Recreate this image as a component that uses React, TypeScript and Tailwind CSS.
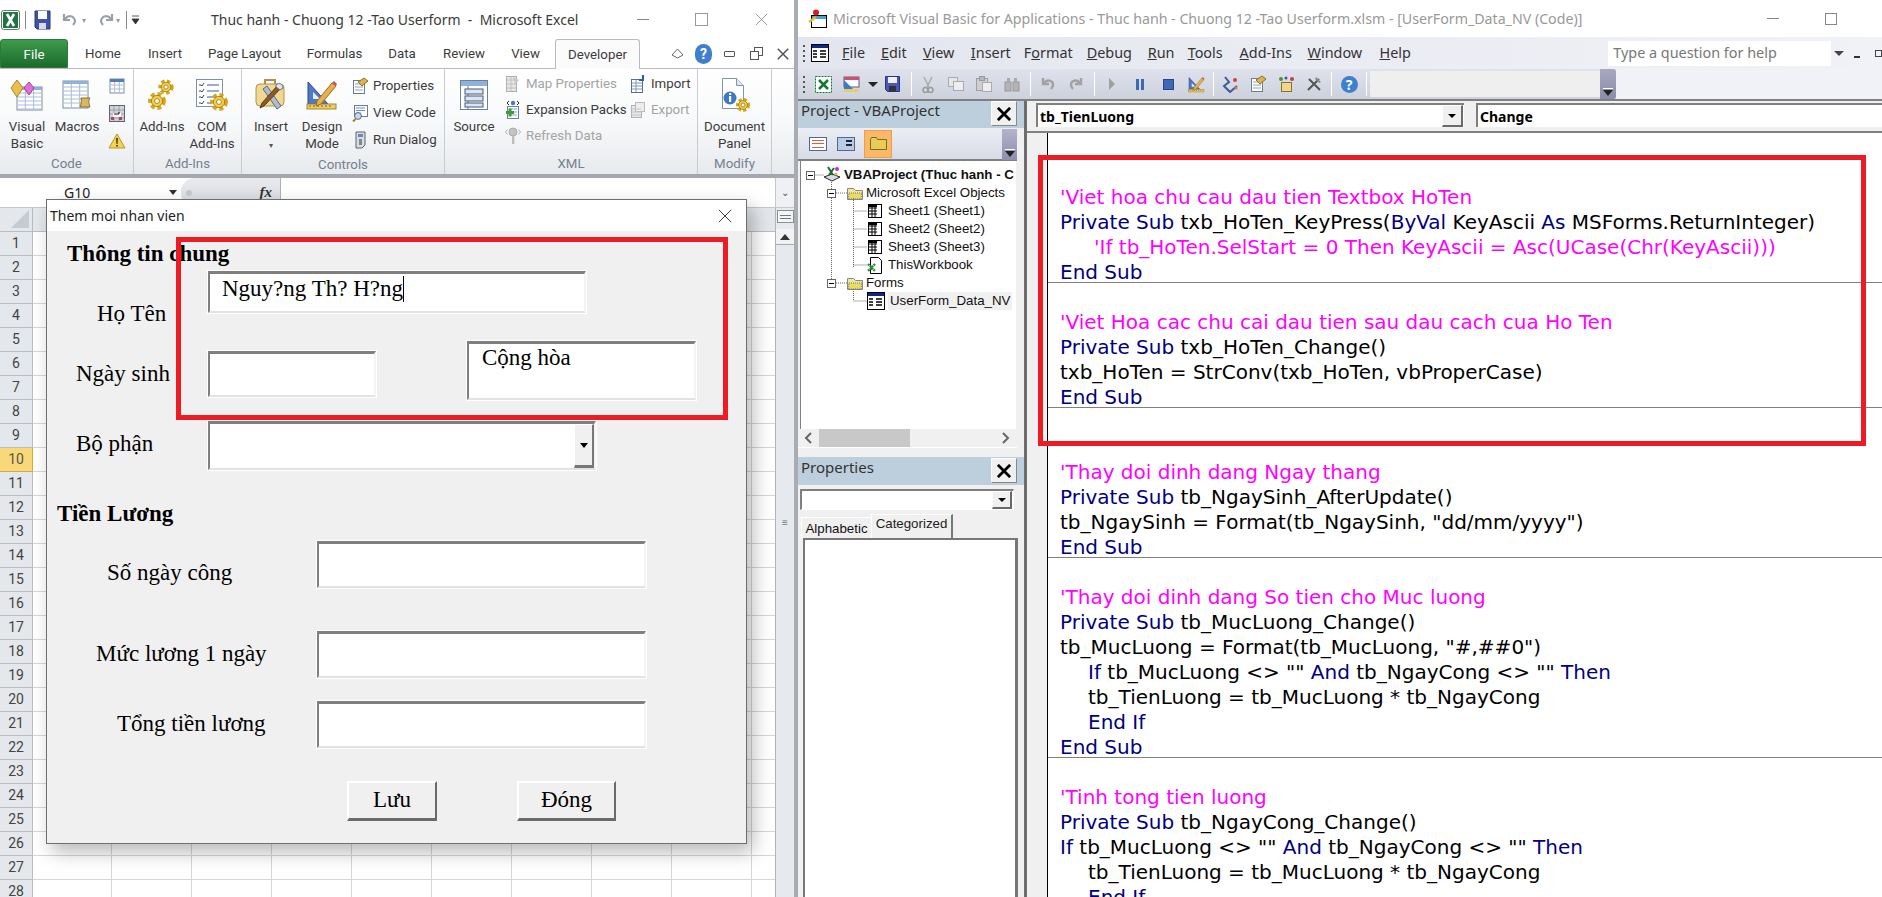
import React from "react";

const Tab = ({ w, t }: { w: string; t: string }) => <div className={`${w} text-center`}>{t}</div>;

const Gear = ({ x, y, r }: { x: number; y: number; r: number }) => (
  <g>
    <circle cx={x} cy={y} r={r} fill="none" stroke="#d9a514" strokeWidth={r * 0.55} strokeDasharray={`${r * 0.55} ${r * 0.4}`} />
    <circle cx={x} cy={y} r={r * 0.8} fill="#f4cf4a" stroke="#9c7410" strokeWidth="0.8" />
    <circle cx={x} cy={y} r={r * 0.35} fill="#fff" stroke="#9c7410" strokeWidth="0.8" />
  </g>
);

const TableRows = ({ x, y, w, h, head = "#8fb2dc" }: { x: number; y: number; w: number; h: number; head?: string }) => (
  <g>
    <rect x={x} y={y} width={w} height={h} fill="#fff" stroke="#7a8da8" />
    <rect x={x} y={y} width={w} height={3} fill={head} />
    {[6, 10, 14, 18, 22].filter((d) => d < h).map((d) => (
      <line key={d} x1={x + 1} x2={x + w - 1} y1={y + d} y2={y + d} stroke="#a8bcd8" />
    ))}
    <line x1={x + w / 3} x2={x + w / 3} y1={y + 3} y2={y + h} stroke="#a8bcd8" />
    <line x1={x + (2 * w) / 3} x2={x + (2 * w) / 3} y1={y + 3} y2={y + h} stroke="#a8bcd8" />
  </g>
);

const VisualBasicIcon = () => (
  <svg width="34" height="32" viewBox="0 0 34 32">
    <TableRows x={7} y={8} w={25} h={23} />
    <path d="M7 1l6 8-6 9-6-9z" fill="#e8c04a" stroke="#a8842a" />
    <path d="M19 3l5 6-5 7-5-7z" fill="#e070d8" stroke="#a040a0" />
  </svg>
);
const MacrosIcon = () => (
  <svg width="34" height="32" viewBox="0 0 34 32">
    <TableRows x={3} y={2} w={25} h={27} />
    <path d="M21 19h9c-2 3-1 6 0 9h-10c1-3 2-6 1-9z" fill="#d9b860" stroke="#8c6f28" />
  </svg>
);
const RecordIcon = () => (
  <svg width="16" height="16" viewBox="0 0 16 16">
    <TableRows x={1} y={1} w={14} h={14} head="#4f7fbf" />
    <circle cx="5" cy="3" r="1" fill="#d04040" />
  </svg>
);
const RelIcon = () => (
  <svg width="16" height="17" viewBox="0 0 16 17">
    <rect x="0.5" y="0.5" width="15" height="16" fill="#cfd3da" stroke="#5c6470" />
    <path d="M1 5h14M1 9h14M1 13h14M5 1v15M10 1v15" stroke="#7b8390" strokeWidth="0.6" />
    <rect x="4" y="8" width="8" height="4" fill="#fff" />
    <path d="M5 9h5v-2" stroke="#111" fill="none" />
    <rect x="2" y="12" width="3" height="3" fill="#c8385a" />
    <rect x="10" y="12" width="3" height="3" fill="#c8385a" />
  </svg>
);
const WarnIcon = () => (
  <svg width="18" height="16" viewBox="0 0 18 16">
    <path d="M9 1l8 14H1z" fill="#f7d24a" stroke="#b8962c" />
    <path d="M8.2 5h1.6l-.3 6h-1zM8.2 12h1.6v1.6H8.2z" fill="#222" />
  </svg>
);
const AddInsIcon = () => (
  <svg width="28" height="32" viewBox="0 0 28 32">
    <Gear x={18} y={8} r={6} />
    <Gear x={9} y={22} r={7} />
  </svg>
);
const ComIcon = () => (
  <svg width="34" height="34" viewBox="0 0 34 34">
    <rect x="1.5" y="1.5" width="26" height="27" fill="#fff" stroke="#8090a8" />
    <path d="M4 7h2l1 1 2-3M4 13h2l1 1 2-3M4 19h2l1 1 2-3M4 25h2l1 1 2-3" stroke="#445" fill="none" />
    <path d="M12 7h12M12 13h12M12 19h7M12 25h4" stroke="#7a94c4" strokeWidth="1.4" />
    <Gear x={24} y={24} r={7} />
  </svg>
);
const InsertIcon = () => (
  <svg width="34" height="34" viewBox="0 0 34 34">
    <rect x="2" y="6" width="28" height="22" rx="4" fill="#f0d890" stroke="#b2924a" />
    <path d="M11 6V2h10v4" fill="none" stroke="#b2924a" strokeWidth="2" />
    <path d="M9 11l14 20 4-3L13 8z" fill="#aebccc" stroke="#5d6b7e" />
    <path d="M28 9L10 28l-4 2 2-5L24 7z" fill="#8a5a28" stroke="#5e3a14" />
    <path d="M22 7c3-3 7-1 7 3l-3 2-4-3z" fill="#dfe5ee" stroke="#5d6b7e" />
  </svg>
);
const DesignIcon = ({ s = 32 }: { s?: number }) => (
  <svg width={s} height={s} viewBox="0 0 32 32">
    <path d="M2 3v22h20z" fill="#4f78c8" stroke="#27468c" />
    <path d="M7 13v7h7z" fill="#e8edf8" />
    <rect x="1" y="25" width="29" height="5" fill="#e8cd68" stroke="#a8872a" />
    <path d="M4 26v2M8 26v2M12 26v2M16 26v2M20 26v2M24 26v2" stroke="#7c6518" />
    <path d="M11 22l15-18 4 3-15 18-5 2z" fill="#e8b04c" stroke="#a06c20" />
    <path d="M26 4l2-2 3 3-1 2z" fill="#d05050" />
  </svg>
);
const PropsIcon = () => (
  <svg width="17" height="18" viewBox="0 0 17 18">
    <rect x="1.5" y="3.5" width="11" height="13" fill="#fff" stroke="#6c7c94" />
    <path d="M3 7h8M3 10h8M3 13h8" stroke="#8aa0c0" />
    <path d="M6 5l6-4 4 3-6 5z" fill="#d8b450" stroke="#8d7226" />
  </svg>
);
const ViewCodeIcon = () => (
  <svg width="17" height="18" viewBox="0 0 17 18">
    <rect x="2.5" y="1.5" width="13" height="11" fill="#fff" stroke="#6c7c94" />
    <path d="M4 4h9M4 6.5h9M4 9h5" stroke="#6a8cc0" />
    <circle cx="6" cy="12" r="3.4" fill="#c6d8ec" stroke="#5a6a7c" />
    <path d="M3.5 15L1 17.5" stroke="#a87c30" strokeWidth="2" />
  </svg>
);
const RunDlgIcon = () => (
  <svg width="16" height="18" viewBox="0 0 16 18">
    <path d="M4 1h9v13l-3 3H4z" fill="#d8dde4" stroke="#5a6470" />
    <rect x="6" y="3" width="5" height="3" fill="#6c88b0" />
    <rect x="7" y="8" width="3" height="6" fill="#7c8898" />
  </svg>
);
const SourceIcon = () => (
  <svg width="32" height="34" viewBox="0 0 32 34">
    <rect x="2.5" y="2.5" width="27" height="29" fill="#fff" stroke="#6c7f9c" />
    <rect x="3" y="3" width="26" height="5" fill="#8fb2dc" />
    <path d="M10 8v23" stroke="#6c7f9c" />
    <rect x="7" y="11" width="18" height="5" fill="#dbe6f4" stroke="#44597a" />
    <rect x="7" y="18" width="18" height="5" fill="#dbe6f4" stroke="#44597a" />
    <rect x="7" y="25" width="18" height="4" fill="#dbe6f4" stroke="#44597a" />
  </svg>
);
const MapIcon = () => (
  <svg width="16" height="18" viewBox="0 0 16 18">
    <rect x="1.5" y="1.5" width="10" height="15" fill="#e6e6e6" stroke="#b0b0b0" />
    <path d="M2 5h9M2 9h9M2 13h9M6 2v14" stroke="#c0c0c0" />
    <path d="M8 2l6 3-4 4z" fill="#c8c8c8" />
  </svg>
);
const ExpIcon = () => (
  <svg width="16" height="20" viewBox="0 0 16 20">
    <rect x="2.5" y="6.5" width="11" height="12" fill="#fff" stroke="#6d7f99" />
    <path d="M4 9h8M4 12h8M4 15h8" stroke="#8da4c4" />
    <rect x="1" y="11" width="8" height="3" fill="#3f9a38" />
    <rect x="3.5" y="8.5" width="3" height="8" fill="#3f9a38" />
    <circle cx="8" cy="3" r="2.2" fill="#3c7ec0" />
    <path d="M2 3l2-2M2 3l2 2M14 3l-2-2M14 3l-2 2" stroke="#222" />
  </svg>
);
const RefreshIcon = () => (
  <svg width="16" height="20" viewBox="0 0 16 20">
    <circle cx="8" cy="6" r="4" fill="#c4c4c4" stroke="#aaa" />
    <rect x="7" y="10" width="2.4" height="8" fill="#bdbdbd" />
    <path d="M2.5 3.5L.5 6l2 2.5M13.5 3.5l2 2.5-2 2.5" stroke="#b0b0b0" fill="none" />
  </svg>
);
const ImportIcon = () => (
  <svg width="16" height="18" viewBox="0 0 16 18">
    <rect x="1.5" y="4.5" width="11" height="13" fill="#fff" stroke="#5d6f8b" />
    <path d="M2 8h10M2 11h10M2 14h10M6 5v12" stroke="#7e97bd" />
    <path d="M13 0v5h-4" fill="none" stroke="#2c5ea8" strokeWidth="2" />
  </svg>
);
const ExportIcon = () => (
  <svg width="16" height="18" viewBox="0 0 16 18">
    <rect x="1.5" y="4.5" width="10" height="12" fill="#e8e8e8" stroke="#b4b4b4" />
    <rect x="5.5" y="1.5" width="9" height="9" fill="#ededed" stroke="#bbb" />
    <path d="M2 8h9M2 11h9M2 14h9" stroke="#c6c6c6" />
  </svg>
);
const DocPanelIcon = () => (
  <svg width="32" height="36" viewBox="0 0 32 36">
    <path d="M3.5 1.5h14l7 7v23h-21z" fill="#fff" stroke="#8393aa" />
    <path d="M17.5 1.5v7h7" fill="#dfe6ef" stroke="#8393aa" />
    <circle cx="11" cy="21" r="6.5" fill="#3f77c8" />
    <rect x="10" y="19" width="2.2" height="6" fill="#fff" />
    <rect x="10" y="16" width="2.2" height="2" fill="#fff" />
    <Gear x={24} y={28} r={5.5} />
  </svg>
);

const Big = ({ w, icon, l1, l2, icoH = "h-[36px]" }: { w: string; icon: React.ReactNode; l1: string; l2?: React.ReactNode; icoH?: string }) => (
  <div className={`${w} flex flex-col items-center`}>
    <div className={`${icoH} flex items-center justify-center mt-[8px]`}>{icon}</div>
    <div className="mt-[5px] leading-[17px] text-center whitespace-nowrap text-[#3c3c3c]">{l1}</div>
    <div className="leading-[17px] text-center whitespace-nowrap text-[#3c3c3c]">{l2}</div>
  </div>
);

const Group = ({ w, label, children }: { w: string; label: string; children: React.ReactNode }) => (
  <div className={`${w} flex flex-col border-r border-[#c8ccd2] shrink-0`}>
    <div className="flex h-[85px]">{children}</div>
    <div className="h-[21px] text-center text-[#75808c] leading-[21px]">{label}</div>
  </div>
);

const SmallItem = ({ icon, t, dis, h = "h-[27px]" }: { icon: React.ReactNode; t: string; dis?: boolean; h?: string }) => (
  <div className={`flex items-center ${h} whitespace-nowrap`}>
    <div className="w-[21px] flex justify-start">{icon}</div>
    <span className={dis ? "text-[#a4a4a4]" : "text-[#3c3c3c]"}>{t}</span>
  </div>
);

const XClose = ({ s = 16, c = "#333", w = 1 }: { s?: number; c?: string; w?: number }) => (
  <svg width={s} height={s} viewBox="0 0 16 16">
    <path d="M1 1l14 14M15 1L1 15" stroke={c} strokeWidth={w} fill="none" />
  </svg>
);

const TitleBar = () => (
  <div className="h-[39px] flex items-center bg-white relative shrink-0">
    <svg className="ml-[1px]" width="20" height="22" viewBox="0 0 20 22">
      <rect x="0.5" y="1.5" width="18" height="19" rx="2" fill="#fff" stroke="#5e7a62" />
      <rect x="2" y="3" width="15" height="16" fill="#217346" />
      <path d="M6 5l7 12M13 5L6 17" stroke="#fff" strokeWidth="2.6" />
    </svg>
    <div className="ml-[4px] w-px h-[18px] bg-[#8a8a8a]" />
    <svg className="ml-[8px]" width="17" height="20" viewBox="0 0 17 20">
      <path d="M1 1h15v18H3l-2-2z" fill="#3f52a8" stroke="#2b3977" />
      <rect x="4" y="1" width="9" height="8" fill="#fff" />
      <rect x="5" y="13" width="7" height="6" fill="#d8dbe6" />
    </svg>
    <svg className="ml-[11px]" width="18" height="16" viewBox="0 0 18 16">
      <path d="M2 2v6h6M3 7c3-4 9-4 10 2 0 2-1 3-2 4" stroke="#9aa0a8" strokeWidth="2.2" fill="none" />
    </svg>
    <span className="text-[#9a9a9a] text-[8px] ml-[2px]">▾</span>
    <svg className="ml-[10px]" width="18" height="16" viewBox="0 0 18 16">
      <path d="M16 2v6h-6M15 7c-3-4-9-4-10 2 0 2 1 3 2 4" stroke="#9aa0a8" strokeWidth="2.2" fill="none" />
    </svg>
    <span className="text-[#9a9a9a] text-[8px] ml-[2px]">▾</span>
    <div className="ml-[6px] w-px h-[18px] bg-[#8a8a8a]" />
    <svg className="ml-[4px]" width="9" height="10" viewBox="0 0 9 10"><path d="M1 1h7M1 4h7L4.5 9z" fill="#333" stroke="#333" strokeWidth="0.8" /></svg>
    <div className="ml-[71px] text-[14px] text-[#3a3a3a] whitespace-nowrap w-[370px]">Thuc hanh - Chuong 12 -Tao Userform&nbsp; -&nbsp; Microsoft Excel</div>
    <div className="w-[12px] h-px bg-[#888] ml-[56px]" />
    <div className="w-[13px] h-[13px] border border-[#999] ml-[46px]" />
    <div className="ml-[47px]"><XClose s={13} c="#888" /></div>
  </div>
);

const TabsRow = () => (
  <div className="h-[29px] flex bg-white text-[13.3px] [font-family:'Roboto',sans-serif] text-[#3c3c3c] leading-[29px] relative shrink-0 z-10">
    <div className="w-[68px] text-center text-white bg-gradient-to-b from-[#3e9b4c] to-[#1a6b2c] rounded-t-[3px] border border-[#2b7a3a]">File</div>
    <Tab w="w-[70px]" t="Home" />
    <Tab w="w-[54px]" t="Insert" />
    <Tab w="w-[105px]" t="Page Layout" />
    <Tab w="w-[75px]" t="Formulas" />
    <Tab w="w-[60px]" t="Data" />
    <Tab w="w-[64px]" t="Review" />
    <Tab w="w-[59px]" t="View" />
    <div className="w-[85px] h-[30px] text-center bg-[#fbfbfc] border border-b-0 border-[#b8bcc2] rounded-t-[3px]">Developer</div>
    <div className="flex items-center ml-[31px] h-[29px]">
      <svg width="13" height="11" viewBox="0 0 13 11"><path d="M6.5 1L12 7l-5.5 3L1 7z" fill="#fff" stroke="#666" /></svg>
      <div className="ml-[11px] w-[17px] h-[20px] rounded-full bg-[#3f7fd0] text-white text-[14px] font-bold leading-[20px] text-center">?</div>
      <div className="w-[11px] h-[6px] border border-[#555] rounded-[1px] ml-[12px]" />
      <svg className="ml-[15px]" width="13" height="13" viewBox="0 0 13 13"><rect x="4.5" y="0.5" width="8" height="8" fill="#fff" stroke="#555" /><rect x="0.5" y="4.5" width="8" height="8" fill="#fff" stroke="#555" /></svg>
      <div className="ml-[14px]"><XClose s={12} c="#555" w={2} /></div>
    </div>
  </div>
);

const Ribbon = () => (
  <div className="h-[106px] flex bg-gradient-to-b from-white via-[#f8f9fa] to-[#e7eaee] text-[13.3px] [font-family:'Roboto',sans-serif] border-t border-[#b8bcc2] shrink-0">
    <Group w="w-[134px]" label="Code">
      <Big w="w-[54px]" icon={<VisualBasicIcon />} l1="Visual" l2="Basic" />
      <Big w="w-[46px]" icon={<MacrosIcon />} l1="Macros" l2={"\u00a0"} />
      <div className="w-[33px] flex flex-col items-center pt-[9px] gap-[11px]"><RecordIcon /><RelIcon /><WarnIcon /></div>
    </Group>
    <Group w="w-[108px]" label="Add-Ins">
      <Big w="w-[56px]" icon={<AddInsIcon />} l1="Add-Ins" l2={"\u00a0"} />
      <Big w="w-[44px]" icon={<ComIcon />} l1="COM" l2="Add-Ins" />
    </Group>
    <Group w="w-[203px]" label="Controls">
      <Big w="w-[58px]" icon={<InsertIcon />} l1="Insert" l2={<span className="text-[8px] text-[#555]">▾</span>} />
      <Big w="w-[44px]" icon={<DesignIcon />} l1="Design" l2="Mode" />
      <div className="ml-[8px] pt-[3px]">
        <SmallItem icon={<PropsIcon />} t="Properties" />
        <SmallItem icon={<ViewCodeIcon />} t="View Code" />
        <SmallItem icon={<RunDlgIcon />} t="Run Dialog" />
      </div>
    </Group>
    <Group w="w-[253px]" label="XML">
      <Big w="w-[58px]" icon={<SourceIcon />} l1="Source" l2={"\u00a0"} />
      <div className="ml-[2px] pt-[2px] w-[125px]">
        <SmallItem h="h-[26px]" icon={<MapIcon />} t="Map Properties" dis />
        <SmallItem h="h-[26px]" icon={<ExpIcon />} t="Expansion Packs" />
        <SmallItem h="h-[26px]" icon={<RefreshIcon />} t="Refresh Data" dis />
      </div>
      <div className="pt-[2px]">
        <SmallItem h="h-[26px]" icon={<ImportIcon />} t="Import" />
        <SmallItem h="h-[26px]" icon={<ExportIcon />} t="Export" dis />
      </div>
    </Group>
    <Group w="w-[74px]" label="Modify">
      <Big w="w-[73px]" icon={<DocPanelIcon />} l1="Document" l2="Panel" />
    </Group>
  </div>
);

const FormulaBar = () => (
  <div className="h-[34px] flex items-center bg-white border-t-[4px] border-[#a4a8ae] shrink-0 border-b border-b-[#c4c8ce]">
    <div className="w-[169px] pl-[64px] text-[14px] text-[#222]">G10</div>
    <div className="w-0 h-0 border-x-[4px] border-x-transparent border-t-[5px] border-t-[#333]" />
    <div className="ml-[4px] w-[100px] h-full bg-gradient-to-b from-[#e8eaee] to-[#d8dbe0] rounded-l-[14px] border-r border-[#b0b4ba] flex items-center justify-between pl-[5px] pr-[8px] [font-family:'Liberation_Serif',serif] italic font-bold text-[15px] text-[#333]">
      <div className="w-[6px] h-[6px] rounded-full bg-[#c6c9ce]" />
      <span>fx</span>
    </div>
    <div className="flex-1" />
    <div className="w-[19px] h-full border-l border-[#c4c8ce] bg-[#eef0f3] flex items-center justify-center text-[10px] text-[#555]">⌄</div>
  </div>
);

const rowNums = Array.from({ length: 28 }, (_, i) => i + 1);
const cols = [79, 80, 80, 80, 80, 80, 80, 80, 80];

const Sheet = () => (
  <div className="flex-1 flex min-h-0 relative">
    <div className="w-[775px] flex flex-col">
      <div className="h-[24px] flex bg-[#e4e7eb] border-b border-[#b8bdc4] shrink-0">
        <div className="w-[33px] border-r border-[#b8bdc4] flex items-end justify-end p-[3px]">
          <div className="w-0 h-0 border-l-[18px] border-l-transparent border-b-[18px] border-b-[#c6cbd2]" />
        </div>
      </div>
      {rowNums.map((n) => (
        <div key={n} className="h-[24px] flex shrink-0">
          <div className={n === 10
            ? "w-[33px] h-[24px] flex items-center justify-center text-[14px] [font-family:'Roboto',sans-serif] bg-[#f9d878] text-[#555] border-b border-r border-[#d2a84a]"
            : "w-[33px] h-[24px] flex items-center justify-center text-[14px] [font-family:'Roboto',sans-serif] bg-[#e4e7eb] text-[#444] border-b border-r border-[#b8bdc4]"}>{n}</div>
          {cols.map((w, i) => (
            <div key={i} style={{ width: w }} className="h-[24px] border-b border-r border-[#d6d6d6] bg-white" />
          ))}
          <div className="flex-1 border-b border-[#d6d6d6] bg-white" />
        </div>
      ))}
    </div>
    <div className="w-[19px] bg-[#e6e9ed] border-l border-[#b0b4ba] flex flex-col items-center">
      <div className="w-[17px] h-[13px] mt-[2px] border border-[#8a8f96] bg-[#f4f5f7] flex items-center justify-center"><div className="w-[11px] h-[4px] border-y border-[#777]" /></div>
      <div className="mt-[6px] h-[16px] w-[18px] bg-[#f0f2f4] border-b border-[#aaa] flex items-center justify-center">
        <div className="w-0 h-0 border-x-[5px] border-x-transparent border-b-[6px] border-b-[#333]" />
      </div>
      <div className="h-[275px]" />
      <div className="text-[10px] leading-[4px] text-[#777]">≡</div>
    </div>
  </div>
);

const inset = "bg-white border-t-[3px] border-l-[2px] border-r-[2px] border-b-[2px] border-t-[#7f7f7f] border-l-[#7f7f7f] border-r-[#f4f4f4] border-b-[#e2e2e2] outline outline-1 outline-white";
const label = "h-[25px] leading-[25px] text-[23px] text-[#000] whitespace-nowrap";
const head = "h-[25px] leading-[25px] text-[23px] font-bold text-[#000] whitespace-nowrap";

const UserForm = () => (
  <div className="absolute left-[46px] top-[199px] w-[701px] h-[645px] border border-[#6e6e6e] bg-[#f0f0f0] shadow-[6px_8px_18px_rgba(0,0,0,0.28)] flex flex-col z-20">
    <div className="h-[31px] bg-white flex items-center justify-between pl-[3px] pr-[14px] text-[14px] text-[#222] shrink-0">
      <span>Them moi nhan vien</span>
      <XClose s={14} c="#222" />
    </div>
    <div className="[font-family:'Liberation_Serif',serif] flex flex-col">
      <div className={`${head} mt-[10px] mb-[1px] ml-[20px]`}>Thông tin chung</div>
      <div className="flex mt-[4px]">
        <div className="w-[161px] flex flex-col">
          <div className={`${label} mt-[30px] mb-[1px] ml-[50px]`}>Họ Tên</div>
          <div className={`${label} mt-[34px] ml-[29px]`}>Ngày sinh</div>
        </div>
        <div className="flex flex-col">
          <div className={`${inset} w-[378px] h-[42px] pl-[12px] flex items-start text-[23px] leading-[29px]`}>
            <span>Nguy?ng Th? H?ng</span><span className="w-px h-[26px] bg-black mt-[2px]" />
          </div>
          <div className="flex items-start mt-[28px]">
            <div className={`${inset} w-[168px] h-[46px] mt-[10px]`} />
            <div className={`${inset} w-[229px] h-[59px] ml-[91px] pl-[13px] text-[23px] leading-[28px]`}>Cộng hòa</div>
          </div>
        </div>
      </div>
      <div className="flex mt-[21px]">
        <div className="w-[161px]"><div className={`${label} mt-[10px] ml-[29px]`}>Bộ phận</div></div>
        <div className={`${inset} w-[388px] h-[49px] flex justify-end`}>
          <div className="w-[20px] h-full bg-[#f0f0f0] border-l border-t border-white border-r-[2px] border-b-[3px] border-r-[#777] border-b-[#777] flex items-center justify-center">
            <div className="w-0 h-0 border-x-[4px] border-x-transparent border-t-[5px] border-t-black" />
          </div>
        </div>
      </div>
      <div className={`${head} mt-[31px] mb-[1px] ml-[10px]`}>Tiền Lương</div>
      <div className="flex mt-[14px]">
        <div className="w-[270px]"><div className={`${label} mt-[19px] ml-[60px]`}>Số ngày công</div></div>
        <div className={`${inset} w-[329px] h-[47px]`} />
      </div>
      <div className="flex mt-[43px]">
        <div className="w-[270px]"><div className={`${label} mt-[10px] ml-[49px]`}>Mức lương 1 ngày</div></div>
        <div className={`${inset} w-[329px] h-[47px]`} />
      </div>
      <div className="flex mt-[23px]">
        <div className="w-[270px]"><div className={`${label} mt-[10px] ml-[70px]`}>Tổng tiền lương</div></div>
        <div className={`${inset} w-[329px] h-[47px]`} />
      </div>
      <div className="flex mt-[33px] ml-[300px] text-[23px]">
        <div className="w-[90px] h-[40px] flex items-center justify-center border-t-[2px] border-l-[2px] border-white border-r-[2px] border-b-[3px] border-r-[#6a6a6a] border-b-[#6a6a6a]">Lưu</div>
        <div className="w-[99px] h-[40px] ml-[80px] flex items-center justify-center border-t-[2px] border-l-[2px] border-white border-r-[2px] border-b-[3px] border-r-[#6a6a6a] border-b-[#6a6a6a]">Đóng</div>
      </div>
    </div>
  </div>
);

const Grip = () => (
  <div className="w-[3px] flex flex-col gap-[3px] ml-[5px] shrink-0">
    {[0, 1, 2, 3].map((i) => <div key={i} className="w-[2px] h-[2px] bg-[#555]" />)}
  </div>
);

const ModIcon = () => (
  <svg width="18" height="18" viewBox="0 0 18 18">
    <rect x="0.5" y="0.5" width="17" height="17" fill="#fff" stroke="#000" />
    <rect x="1" y="1" width="16" height="3" fill="#0a2a8a" />
    <path d="M2 7h4M2 10h4M2 13h4M9 7h6M9 10h6M9 13h6" stroke="#000" strokeWidth="1.5" />
  </svg>
);

const Slot = ({ w = "w-[28px]", children }: { w?: string; children: React.ReactNode }) => (
  <div className={`${w} flex justify-center items-center shrink-0`}>{children}</div>
);
const TSep = () => <div className="w-px h-[24px] bg-white shrink-0" />;

const Toolbar = () => (
  <div className="h-[30px] flex items-center w-[818px] bg-gradient-to-b from-[#dfe2ec] to-[#cdd1dc] shrink-0">
    <Grip />
    <div className="w-[3px]" />
    <Slot>
      <svg width="17" height="17" viewBox="0 0 17 17"><rect x="0.5" y="0.5" width="16" height="16" fill="#fff" stroke="#117a2a" strokeDasharray="2 1" /><path d="M4 4l9 9M13 4l-9 9" stroke="#117a2a" strokeWidth="2.5" /></svg>
    </Slot>
    <Slot w="w-[28px]">
      <svg width="17" height="17" viewBox="0 0 17 17"><rect x="1" y="1" width="15" height="10" fill="#fff" stroke="#5a5a8a" /><rect x="1" y="1" width="15" height="3" fill="#d05070" /><path d="M1 4v10h10z" fill="#3d7ac8" /><rect x="1" y="13" width="15" height="3" fill="#e8cd68" /></svg>
    </Slot>
    <Slot w="w-[16px]"><div className="w-0 h-0 border-x-[5px] border-x-transparent border-t-[5px] border-t-[#222]" /></Slot>
    <Slot w="w-[22px]">
      <svg width="15" height="16" viewBox="0 0 15 16"><path d="M.5.5h14v15H2.5l-2-2z" fill="#4a57b8" stroke="#2a3480" /><rect x="3" y="1" width="9" height="6" fill="#f0f0f0" /><rect x="4" y="10" width="7" height="5" fill="#333" /></svg>
    </Slot>
    <div className="w-[8px]" /><TSep /><div className="w-[2px]" />
    <Slot>
      <svg width="12" height="17" viewBox="0 0 12 17"><path d="M2 1l5 10M10 1L5 11" stroke="#aaa" strokeWidth="1.5" /><circle cx="3.5" cy="14" r="2.5" fill="none" stroke="#9a9a9a" strokeWidth="1.5" /><circle cx="8.5" cy="14" r="2.5" fill="none" stroke="#9a9a9a" strokeWidth="1.5" /></svg>
    </Slot>
    <Slot>
      <svg width="16" height="14" viewBox="0 0 16 14"><rect x="0.5" y="0.5" width="9" height="9" fill="#e6e6e6" stroke="#aaa" /><rect x="5.5" y="4.5" width="10" height="9" fill="#eee" stroke="#aaa" /></svg>
    </Slot>
    <Slot>
      <svg width="16" height="16" viewBox="0 0 16 16"><rect x="0.5" y="2.5" width="11" height="12" fill="#cfcfcf" stroke="#a0a0a0" /><rect x="3.5" y="0.5" width="5" height="4" fill="#b8b8b8" stroke="#999" /><rect x="6.5" y="6.5" width="9" height="9" fill="#eee" stroke="#aaa" /></svg>
    </Slot>
    <Slot>
      <svg width="16" height="15" viewBox="0 0 16 15"><rect x="1" y="5" width="6" height="9" fill="#b4b4b4" stroke="#999" /><rect x="9" y="5" width="6" height="9" fill="#b4b4b4" stroke="#999" /><rect x="3" y="1" width="3" height="5" fill="#aaa" /><rect x="10" y="1" width="3" height="5" fill="#aaa" /></svg>
    </Slot>
    <div className="w-[4px]" /><TSep /><div className="w-[3px]" />
    <Slot><svg width="14" height="14" viewBox="0 0 14 14"><path d="M2 1v6h6M3 6c3-4 9-3 9 2 0 2-1 3-2 4" stroke="#a2a2a2" strokeWidth="2.4" fill="none" /></svg></Slot>
    <Slot><svg width="14" height="14" viewBox="0 0 14 14"><path d="M12 1v6H6M11 6C8 2 2 3 2 8c0 2 1 3 2 4" stroke="#a2a2a2" strokeWidth="2.4" fill="none" /></svg></Slot>
    <div className="w-[4px]" /><TSep /><div className="w-[3px]" />
    <Slot><div className="w-0 h-0 border-y-[6px] border-y-transparent border-l-[6px] border-l-[#a0a0a0]" /></Slot>
    <Slot><div className="flex gap-[2px]"><div className="w-[3px] h-[11px] bg-[#3d68b8]" /><div className="w-[3px] h-[11px] bg-[#3d68b8]" /></div></Slot>
    <Slot><div className="w-[11px] h-[11px] bg-[#3d68b8] border border-[#27468c]" /></Slot>
    <Slot><DesignIcon s={17} /></Slot>
    <div className="w-[3px]" /><TSep /><div className="w-[2px]" />
    <Slot>
      <svg width="17" height="17" viewBox="0 0 17 17"><path d="M3 1l4 5-5 4 6 6 7-6" fill="none" stroke="#3a5aa0" strokeWidth="2" /><circle cx="13" cy="4" r="2" fill="#d04040" /><circle cx="14" cy="12" r="1.5" fill="#e08030" /></svg>
    </Slot>
    <Slot><PropsIcon /></Slot>
    <Slot>
      <svg width="17" height="17" viewBox="0 0 17 17"><rect x="3.5" y="6.5" width="10" height="9" fill="#f0d890" stroke="#8d7226" /><circle cx="3" cy="3" r="2" fill="#3a9a40" /><circle cx="14" cy="3" r="2" fill="#c04040" /><circle cx="8" cy="2" r="1.5" fill="#3a5aa0" /></svg>
    </Slot>
    <Slot>
      <svg width="16" height="16" viewBox="0 0 16 16"><path d="M2 14L13 3M3 3l11 11" stroke="#555" strokeWidth="2" /><path d="M10 1l5 5-2 1-4-4z" fill="#8a8a8a" /></svg>
    </Slot>
    <div className="w-[3px]" /><TSep /><div className="w-[3px]" />
    <Slot><div className="w-[17px] h-[17px] rounded-full bg-[#3f7fd0] text-white text-[14px] font-bold leading-[17px] text-center">?</div></Slot>
    <div className="w-[3px]" /><TSep /><div className="w-[3px]" />
    <div className="flex-1 h-[26px] bg-[#efefef]" />
    <div className="w-[16px] h-[30px] bg-gradient-to-b from-[#a9a8c0] to-[#8d8cab] rounded-r-[3px] flex flex-col items-center justify-end pb-[3px]">
      <div className="w-[10px] h-px bg-white mb-[1px]" />
      <div className="w-0 h-0 border-x-[5px] border-x-transparent border-t-[6px] border-t-[#222]" />
    </div>
  </div>
);

const M = ({ w, a = "", u, b = "" }: { w: string; a?: string; u: string; b?: string }) => (
  <div className={w}>{a}<u>{u}</u>{b}</div>
);

const CloseBtn = () => (
  <div className="w-[26px] h-[25px] bg-[#f0f0f0] border-t border-l border-white border-r border-b border-r-[#888] border-b-[#888] flex items-center justify-center">
    <XClose s={14} c="#000" w={3.2} />
  </div>
);

const Caret = ({ w = "w-[20px]" }: { w?: string }) => (
  <div className={`${w} h-full bg-[#f0f0f0] border-t border-l border-white border-r-[2px] border-b-[2px] border-r-[#6a6a6a] border-b-[#6a6a6a] flex items-center justify-center shrink-0`}>
    <div className="w-0 h-0 border-x-[4px] border-x-transparent border-t-[4px] border-t-black" />
  </div>
);

const TreeRow = ({ pl, icon, t, bold, sel, m = "ml-[5px]" }: { pl: string; icon: React.ReactNode; t: string; bold?: boolean; sel?: boolean; m?: string }) => (
  <div className={`h-[18px] flex items-center ${pl} whitespace-nowrap`}>
    {icon}
    <span className={`${bold ? "font-bold" : ""} ${sel ? "bg-[#f0f0f0] pl-[2px] pr-[2px] ml-[3px] leading-[18px]" : m}`}>{t}</span>
  </div>
);
const FolderI = () => (
  <svg width="16" height="13" viewBox="0 0 16 13"><path d="M.5 3V1.5h6l2 2h7v9H.5z" fill="#efe6a0" stroke="#888" /><path d="M2 6h13l-1 6H1z" fill="#e8dc60" stroke="#777" strokeDasharray="1 1" /></svg>
);
const SheetI = () => (
  <svg width="16" height="14" viewBox="0 0 16 14"><rect x="1.5" y="0.5" width="13" height="13" fill="#fff" stroke="#000" /><path d="M2 4h8M2 7h8M2 10h8M5 1v12M8 1v12" stroke="#000" /><rect x="1" y="1" width="9" height="2" fill="#000" /></svg>
);
const WbI = () => (
  <svg width="16" height="17" viewBox="0 0 16 17"><path d="M3.5 0.5h8l3 3v13h-11z" fill="#fff" stroke="#000" /><path d="M1 7l7 7M8 7l-7 7" stroke="#2a8a3a" strokeWidth="2.4" strokeDasharray="2 .6" /></svg>
);
const VbaI = () => (
  <svg width="18" height="18" viewBox="0 0 18 18"><path d="M1 11l8-3 8 3-8 4z" fill="#d8dce6" stroke="#222" /><path d="M5 1l5 8M11 2L6 9" stroke="#1a6a3a" strokeWidth="2" /><circle cx="14" cy="3" r="2" fill="#c030c0" /><circle cx="13" cy="8" r="1.5" fill="#d8c030" /></svg>
);

const TreeLines = () => (
  <svg className="absolute left-0 top-0 pointer-events-none" width="217" height="160" viewBox="0 0 217 160">
    <g stroke="#666" strokeDasharray="1 1" fill="none">
      <path d="M13.5 14h9M30.5 19v102M35 32h11M52.5 37v70M52.5 50h14M52.5 68h14M52.5 86h14M52.5 104h14M35 122h11M52.5 128v12h14" />
    </g>
    {[[5, 10], [26, 28], [26, 118]].map(([x, y]) => (
      <g key={x + "-" + y}>
        <rect x={x + 0.5} y={y + 0.5} width="8" height="8" fill="#fff" stroke="#666" />
        <path d={`M${x + 2} ${y + 4.5}h5`} stroke="#000" />
      </g>
    ))}
  </svg>
);

const Chev = ({ d }: { d: string }) => (
  <svg width="10" height="14" viewBox="0 0 10 14"><path d={d} stroke="#666" strokeWidth="2" fill="none" /></svg>
);

const ProjectPanel = () => (
  <div className="w-[229px] h-full flex flex-col bg-[#f0f0f0] border-r-[3px] border-[#6d6d6d] text-[13.3px] text-[#111] shrink-0 [font-family:'Liberation_Sans',sans-serif]">
    <div className="h-[27px] bg-[#bdcfdc] flex justify-between items-start pl-[3px] pr-[7px] text-[15px] text-[#333] shrink-0 [font-family:'Noto_Sans',sans-serif]">
      <span className="leading-[18px]">Project - VBAProject</span>
      <CloseBtn />
    </div>
    <div className="h-[33px] flex items-center bg-gradient-to-b from-[#eceef4] to-[#d8dbe6] border-b-[2px] border-[#808080] pl-[11px] shrink-0 mr-[7px]">
      <div className="w-[18px] h-[14px] border border-[#4a6a9a] bg-white mr-[10px] flex flex-col justify-between p-[2px]"><div className="h-px bg-[#d8604a]" /><div className="h-px bg-[#d8604a]" /><div className="h-px bg-[#d8604a]" /></div>
      <div className="w-[18px] h-[14px] border border-[#4a6a9a] bg-[#b8cce4] mr-[9px]"><div className="ml-[8px] mt-[2px] h-[2px] w-[6px] bg-[#223]" /><div className="ml-[8px] mt-[2px] h-[2px] w-[6px] bg-[#223]" /></div>
      <div className="w-[28px] h-[28px] bg-[#fbb868] border border-[#e8a04a] flex items-center justify-center">
        <svg width="17" height="13" viewBox="0 0 17 13"><path d="M.5 2.5l1-2h5l1 2h9v10H.5z" fill="#e8cc58" stroke="#7c6a28" /></svg>
      </div>
      <div className="flex-1" />
      <div className="w-[15px] h-[31px] mt-[1px] bg-gradient-to-b from-[#b5b4cc] to-[#8f8eae] flex flex-col items-center justify-end pb-[3px]">
        <div className="w-[10px] h-px bg-white mb-[1px]" />
        <div className="w-0 h-0 border-x-[5px] border-x-transparent border-t-[6px] border-t-[#222]" />
      </div>
    </div>
    <div className="h-[268px] bg-white ml-[2px] mr-[8px] relative pt-[5px] border-l border-[#808080] shrink-0 overflow-hidden">
      <TreeLines />
      <TreeRow pl="pl-[22px]" icon={<VbaI />} t="VBAProject (Thuc hanh - C" bold m="ml-[3px]" />
      <TreeRow pl="pl-[46px]" icon={<FolderI />} t="Microsoft Excel Objects" m="ml-[3px]" />
      <TreeRow pl="pl-[66px]" icon={<SheetI />} t="Sheet1 (Sheet1)" />
      <TreeRow pl="pl-[66px]" icon={<SheetI />} t="Sheet2 (Sheet2)" />
      <TreeRow pl="pl-[66px]" icon={<SheetI />} t="Sheet3 (Sheet3)" />
      <TreeRow pl="pl-[66px]" icon={<WbI />} t="ThisWorkbook" />
      <TreeRow pl="pl-[46px]" icon={<FolderI />} t="Forms" m="ml-[3px]" />
      <TreeRow pl="pl-[66px]" icon={<ModIcon />} t="UserForm_Data_NV" sel />
    </div>
    <div className="h-[19px] flex items-center bg-[#f0f0f0] mr-[7px] border-b border-white shrink-0">
      <div className="w-[21px] flex justify-center"><Chev d="M7 2L2 7l5 5" /></div>
      <div className="w-[91px] h-[18px] bg-[#c8c8c8]" />
      <div className="flex-1" />
      <div className="w-[24px] flex justify-center"><Chev d="M3 2l5 5-5 5" /></div>
    </div>
    <div className="h-[9px] shrink-0" />
    <div className="h-[28px] bg-[#bdcfdc] flex justify-between items-start pl-[3px] pr-[7px] pt-[1px] text-[15px] text-[#333] shrink-0 [font-family:'Noto_Sans',sans-serif]">
      <span className="leading-[18px]">Properties</span>
      <CloseBtn />
    </div>
    <div className="h-[21px] mt-[4px] ml-[2px] mr-[10px] bg-white border-t-[2px] border-l-[2px] border-[#7f7f7f] border-r border-b border-r-white border-b-white flex justify-end shrink-0 pr-[1px]">
      <Caret />
    </div>
    <div className="flex h-[24px] mt-[4px] items-end ml-[3px] shrink-0">
      <div className="w-[70px] h-[21px] leading-[21px] text-center border-t border-l border-white">Alphabetic</div>
      <div className="w-[82px] h-[24px] leading-[18px] text-center border-t border-l border-white border-r-[2px] border-r-[#777] text-[#222]">Categorized</div>
    </div>
    <div className="flex-1 ml-[5px] mr-[6px] bg-white border-t-[2px] border-l-[2px] border-[#777] border-r-[3px] border-r-[#777]" />
  </div>
);

const K = ({ children }: { children: React.ReactNode }) => <span className="text-[#000080]">{children}</span>;

type L = { c?: React.ReactNode; i?: string; sep?: boolean; cm?: boolean };
const lines: L[] = [
  {}, {},
  { c: "'Viet hoa chu cau dau tien Textbox HoTen", cm: true },
  { c: <><K>Private Sub</K> txb_HoTen_KeyPress(<K>ByVal</K> KeyAscii <K>As</K> MSForms.ReturnInteger)</> },
  { c: "'If tb_HoTen.SelStart = 0 Then KeyAscii = Asc(UCase(Chr(KeyAscii)))", cm: true, i: "pl-[34px]" },
  { c: <K>End Sub</K> }, { sep: true }, {},
  { c: "'Viet Hoa cac chu cai dau tien sau dau cach cua Ho Ten", cm: true },
  { c: <><K>Private Sub</K> txb_HoTen_Change()</> },
  { c: <>txb_HoTen = StrConv(txb_HoTen, vbProperCase)</> },
  { c: <K>End Sub</K> }, { sep: true }, {}, {},
  { c: "'Thay doi dinh dang Ngay thang", cm: true },
  { c: <><K>Private Sub</K> tb_NgaySinh_AfterUpdate()</> },
  { c: <>tb_NgaySinh = Format(tb_NgaySinh, "dd/mm/yyyy")</> },
  { c: <K>End Sub</K> }, { sep: true }, {},
  { c: "'Thay doi dinh dang So tien cho Muc luong", cm: true },
  { c: <><K>Private Sub</K> tb_MucLuong_Change()</> },
  { c: <>tb_MucLuong = Format(tb_MucLuong, "#,##0")</> },
  { c: <><K>If</K> tb_MucLuong &lt;&gt; "" <K>And</K> tb_NgayCong &lt;&gt; "" <K>Then</K></>, i: "pl-[28px]" },
  { c: <>tb_TienLuong = tb_MucLuong * tb_NgayCong</>, i: "pl-[28px]" },
  { c: <K>End If</K>, i: "pl-[28px]" },
  { c: <K>End Sub</K> }, { sep: true }, {},
  { c: "'Tinh tong tien luong", cm: true },
  { c: <><K>Private Sub</K> tb_NgayCong_Change()</> },
  { c: <><K>If</K> tb_MucLuong &lt;&gt; "" <K>And</K> tb_NgayCong &lt;&gt; "" <K>Then</K></> },
  { c: <>tb_TienLuong = tb_MucLuong * tb_NgayCong</>, i: "pl-[28px]" },
  { c: <K>End If</K>, i: "pl-[28px]" },
];

const CodePane = () => (
  <div className="flex-1 flex flex-col min-w-0">
    <div className="h-[32px] flex items-start pt-[2px] bg-[#f0f0f0] border-b-[2px] border-[#808080] pl-[9px] shrink-0 text-[14px] font-bold text-[#000]">
      <div className="w-[428px] h-[24px] bg-white border-t-[2px] border-l-[2px] border-[#7f7f7f] flex items-center justify-between pl-[2px] pr-[1px]">
        <span>tb_TienLuong</span><Caret w="w-[21px]" />
      </div>
      <div className="ml-[12px] flex-1 h-[24px] bg-white border-t-[2px] border-l-[2px] border-[#7f7f7f] pl-[2px] flex items-center">Change</div>
    </div>
    <div className="flex-1 flex min-h-0">
      <div className="w-[21px] bg-[#f0f0f0] border-r border-black shrink-0" />
      <div className="flex-1 bg-white pt-[2px] text-[20px] leading-[25px] text-black overflow-hidden [font-family:'DejaVu_Sans',sans-serif]">
        {lines.map((l, i) =>
          l.sep ? (
            <div key={i} className="h-px -mt-[3px] mb-[2px] bg-[#808080]" />
          ) : (
            <div key={i} className={`h-[25px] pl-[12px] whitespace-pre ${l.cm ? "text-[#ff00ff]" : ""}`}>
              <div className={l.i}>{l.c ?? " "}</div>
            </div>
          )
        )}
      </div>
    </div>
  </div>
);

const VbaWindow = () => (
  <div className="w-[1084px] h-full flex flex-col bg-white [font-family:'Noto_Sans',sans-serif]">
    <div className="h-[37px] flex items-center shrink-0 bg-white">
      <svg className="ml-[10px]" width="20" height="20" viewBox="0 0 20 20">
        <rect x="3.5" y="6.5" width="15" height="12" fill="#fff" stroke="#000" />
        <rect x="4" y="7" width="14" height="3" fill="#4aa0d0" />
        <circle cx="8" cy="3.5" r="3" fill="#d02020" />
        <path d="M1 13l7-5" stroke="#d8c030" strokeWidth="2.5" />
      </svg>
      <div className="ml-[5px] w-[750px] text-[14.2px] text-[#999] whitespace-nowrap">Microsoft Visual Basic for Applications - Thuc hanh - Chuong 12 -Tao Userform.xlsm - [UserForm_Data_NV (Code)]</div>
      <div className="w-[12px] h-px bg-[#888] ml-[184px]" />
      <div className="w-[12px] h-[12px] border border-[#888] ml-[46px]" />
    </div>
    <div className="h-[32px] flex items-center bg-gradient-to-r from-[#e4e6ef] to-[#f1f2f7] text-[14.4px] text-[#333] shrink-0 relative">
      <Grip />
      <div className="w-[5px]" />
      <ModIcon />
      <div className="w-[13px]" />
      <M w="w-[39px]" u="F" b="ile" />
      <M w="w-[42px]" u="E" b="dit" />
      <M w="w-[48px]" u="V" b="iew" />
      <M w="w-[53px]" u="I" b="nsert" />
      <M w="w-[63px]" a="F" u="o" b="rmat" />
      <M w="w-[61px]" u="D" b="ebug" />
      <M w="w-[40px]" u="R" b="un" />
      <M w="w-[52px]" u="T" b="ools" />
      <M w="w-[68px]" u="A" b="dd-Ins" />
      <M w="w-[72px]" u="W" b="indow" />
      <M w="w-[229px]" u="H" b="elp" />
      <div className="w-[238px] h-[25px] bg-white flex items-center justify-between pl-[5px] text-[#777]">
        <span>Type a question for help</span>
        <div className="w-[15px] h-full bg-[#f0f1f6] flex items-center justify-center"><div className="w-0 h-0 border-x-[5px] border-x-transparent border-t-[5px] border-t-[#444]" /></div>
      </div>
      <div className="ml-[8px] w-[6px] h-[2px] bg-[#333] mt-[8px]" />
      <div className="ml-[15px] w-[7px] h-[7px] border border-[#444]" />
    </div>
    <div className="flex bg-[#f1f2f7] shrink-0"><Toolbar /></div>
    <div className="h-[2px] bg-[#808080] shrink-0" />
    <div className="flex-1 flex min-h-0">
      <ProjectPanel />
      <CodePane />
    </div>
  </div>
);

export default function App() {
  return (
    <div className="w-[1882px] h-[897px] overflow-hidden flex relative bg-white [font-family:'Noto_Sans',sans-serif]">
      <div className="w-[794px] h-full flex flex-col shrink-0">
        <TitleBar />
        <TabsRow />
        <Ribbon />
        <FormulaBar />
        <Sheet />
      </div>
      <div className="w-[4px] h-full bg-[#a9adb3] shrink-0" />
      <VbaWindow />
      <UserForm />
      <div className="absolute left-[176px] top-[237px] w-[552px] h-[183px] border-[5px] border-[#ed1c24] z-30" />
      <div className="absolute left-[1038px] top-[155px] w-[828px] h-[291px] border-[5px] border-[#ed1c24] z-30" />
    </div>
  );
}
